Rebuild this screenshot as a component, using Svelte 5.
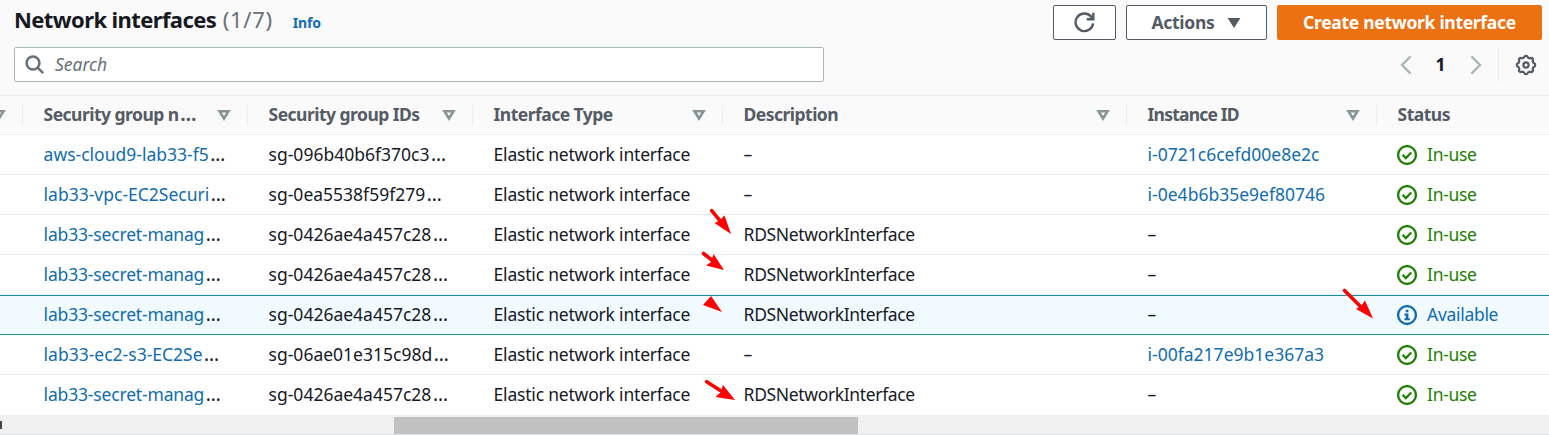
<script>
  const cols = ['Security group n…', 'Security group IDs', 'Interface Type', 'Description', 'Instance ID'];
  const rds = 'RDSNetworkInterface';
  const rows = [
    ['aws-cloud9-lab33-f5', 'sg-096b40b6f370c3', '–', 'i-0721c6cefd00e8e2c'],
    ['lab33-vpc-EC2Securi', 'sg-0ea5538f59f279', '–', 'i-0e4b6b35e9ef80746'],
    ['lab33-secret-manag', 'sg-0426ae4a457c28', rds, '–'],
    ['lab33-secret-manag', 'sg-0426ae4a457c28', rds, '–'],
    ['lab33-secret-manag', 'sg-0426ae4a457c28', rds, '–', true],
    ['lab33-ec2-s3-EC2Se', 'sg-06ae01e315c98d', '–', 'i-00fa217e9b1e367a3'],
    ['lab33-secret-manag', 'sg-0426ae4a457c28', rds, '–']
  ];
  // Outline of the settings cog: eight rounded teeth around the centre (11, 11).
  const gear = Array.from({ length: 64 }, (_, i) => {
    const a = (i / 64) * Math.PI * 2;
    const r = 8.35 + 0.75 * Math.tanh(3 * Math.cos(8 * a));
    return `${i ? 'L' : 'M'}${(11 + r * Math.cos(a)).toFixed(2)} ${(11 + r * Math.sin(a)).toFixed(2)}`;
  }).join('') + 'Z';
</script>

{#snippet filter()}
  <svg class="filter" width="14" height="12" viewBox="0 0 14 12"><path d="M2.500 2.200h9L7 9.500z" /></svg>
{/snippet}

<main>
  <header>
    <h1>Network interfaces <span>(1/7)</span></h1>
    <a class="info" href="#info">Info</a>
    <div class="actions">
      <button class="refresh" aria-label="Refresh">
        <svg width="22" height="22" viewBox="0 0 22 22"><path d="M19.100 11.300A8.800 8.800 0 1 1 16.900 4.400L19.100 6.800" /><path d="M19.300 .7v6.600h-6.600" /></svg>
      </button>
      <button class="menu"><span>Actions</span><svg width="14" height="12" viewBox="0 0 14 12"><path d="M.6 1h12.800L7 11z" /></svg></button>
      <button class="create"><span>Create network interface</span></button>
    </div>
  </header>

  <div class="tools">
    <label class="search">
      <svg width="20" height="20" viewBox="0 0 20 20"><circle cx="8" cy="8" r="6.400" /><path d="M12.600 12.600l5.600 5.600" /></svg>
      <span>Search</span>
    </label>
    <nav>
      <svg class="chev" width="12" height="20" viewBox="0 0 12 20"><path d="M10.600 1.400L2 10l8.600 8.600" /></svg>
      <b>1</b>
      <svg class="chev" width="12" height="20" viewBox="0 0 12 20"><path d="M1.400 1.400L10 10l-8.600 8.600" /></svg>
      <i></i>
      <svg class="gear" width="22" height="22" viewBox="0 0 22 22">
        <path d={gear} />
        <circle cx="11" cy="11" r="2.600" />
      </svg>
    </nav>
  </div>

  <section class="table">
    <div class="row head">
      <div class="edge">{@render filter()}</div>
      {#each cols as name}
        <div class="th"><span class:tight={name === 'Instance ID'}>{name.replace('…', '')}{#if name.endsWith('…')}<span class="dots">…</span>{/if}</span>{@render filter()}</div>
      {/each}
      <div class="th"><span>Status</span></div>
    </div>
    {#each rows as [group, id, description, instance, selected]}
      <div class="row" class:selected>
        <div></div>
        <div class="td name"><a class:narrow={group.includes('secret')} href="#group">{group}</a><span class="dots">…</span></div>
        <div class="td id">{id}<span class="dots">…</span></div>
        <div class="td type">Elastic network interface</div>
        <div class="td desc">{description}</div>
        <div class="td inst">{#if instance === '–'}–{:else}<a href="#instance">{instance}</a>{/if}</div>
        <div class="td status" class:available={selected}>
          <svg width="20" height="20" viewBox="0 0 20 20">
            <circle cx="10" cy="10" r="8.900" />
            {#if selected}
              <path class="solid" d="M8.700 4.700h2.700v2.500H8.700zM7.400 8.500h4v4.700h1.400v2H7.400v-2h1.400v-2.700H7.400z" />
            {:else}
              <path d="M5.700 9.900l3.100 3.100 5.500-5.500" />
            {/if}
          </svg>
          <span>{selected ? 'Available' : 'In-use'}</span>
        </div>
      </div>
    {/each}
    <svg class="arrows" width="1549" height="435" viewBox="0 0 1549 435">
      <g stroke="#f00" stroke-width="3.600" stroke-linecap="round">
        <path d="M711.700 210.700l9 11M703.500 253.500l9 7M706.700 381.700l14 9M1344.500 290.500l17 17" />
      </g>
      <path fill="#f00" d="M731 234l-16.500-11 5-2.500 5-5zM724 270l-18-4.500 5-3.500 2.500-8zM722 312l-19-7 8-9zM735 400l-19.500-3 5-4.500 2.500-7.500zM1373 318.500l-17-9.500 5-3 4-5.500z" />
    </svg>
  </section>
  <div class="scroll"><span class="left"></span><div class="thumb"></div></div>
</main>

<style>
  :global(body) { background: #fafafa; }
  main { position: relative; width: 1549px; height: 435px; overflow: hidden; background: #fafafa; color: #16191f; font: 17.5px/20px 'Noto Sans', sans-serif; font-stretch: 90%; }
  a { color: #0f6cb0; text-decoration: none; }
  svg { display: block; flex: none; fill: none; }
  header { display: flex; height: 41px; padding: 0 7px 0 14px; box-sizing: border-box; white-space: nowrap; }
  h1 { margin: 0; padding-top: 4px; font-size: 22px; line-height: 30px; font-weight: 700; letter-spacing: -.6px; }
  h1 span { margin-left: 1.5px; color: #687078; font-weight: 400; letter-spacing: .7px; }
  .info { margin: 13px 0 0 20px; font-size: 14px; font-weight: 700; letter-spacing: -.2px; }
  .actions { display: flex; gap: 10px; margin-left: auto; padding-top: 5px; }
  button { box-sizing: border-box; height: 35px; padding: 0; display: flex; align-items: center; justify-content: center; border: 1px solid #545b64; border-radius: 2px; background: #fff; color: #545b64; font: 700 17.5px/20px 'Noto Sans', sans-serif; font-stretch: 90%; letter-spacing: -.3px; }
  button span { padding-bottom: 2px; }
  .refresh { width: 63px; }
  .refresh svg { stroke: #545b64; stroke-width: 2.4; }
  .menu { width: 141px; gap: 13px; }
  .menu svg { fill: #545b64; }
  .create { width: 265px; border-color: #ec7211; background: #ec7211; color: #fff; }
  .tools { display: flex; height: 54px; padding: 6px 12px 0 14px; box-sizing: border-box; }
  .search { box-sizing: border-box; width: 810px; height: 35px; border: 1px solid #aab7b8; border-radius: 2px; background: #fff; display: flex; align-items: center; padding-left: 10px; gap: 10px; color: #687078; font-style: italic; }
  .search span { padding-bottom: 1px; }
  .search svg { stroke: #687078; stroke-width: 2.5; }
  nav { display: flex; height: 35px; align-items: center; margin-left: auto; }
  nav b { width: 58px; text-align: center; padding: 0 1px 2px 0; box-sizing: border-box; }
  nav i { width: 1px; height: 35px; background: #eaeded; margin: 0 16px; }
  .chev { stroke: #aab7b8; stroke-width: 2.4; }
  .gear { stroke: #545b64; stroke-width: 2.2; }
  .table { height: 320px; background: #fff; }
  .row { display: grid; grid-template-columns: 22px 225px 225px 250px 404px 250px 1fr; height: 40px; box-sizing: border-box; border-bottom: 1px solid #eaeded; align-items: center; white-space: nowrap; }
  .row:last-of-type { border-bottom: 0; }
  .head { background: #fafafa; border-top: 1px solid #eaeded; color: #545b64; font-weight: 700; letter-spacing: -.53px; }
  .th { display: flex; align-items: center; height: 20px; padding: 0 16px 0 20.600px; border-left: 1px solid #eaeded; justify-content: space-between; }
  .th > span { padding-bottom: 2px; }
  .tight { letter-spacing: -.8px; }
  .edge { display: flex; justify-content: flex-end; padding-right: 16px; }
  .filter { stroke: #879596; stroke-width: 2.6; }
  .dots { margin-left: 1.5px; font-size: 19px; line-height: 0; letter-spacing: 0; font-weight: 400; }
  .head .dots { font-weight: 700; }
  .td { padding: 0 0 2px 21.600px; }
  .narrow { letter-spacing: -.17px; }
  .type { letter-spacing: -.2px; }
  .desc { letter-spacing: -.35px; }
  .selected { background: #f1faff; border-bottom-color: #1e8d9d; box-shadow: inset 0 1px #1e8d9d; }
  .status { display: flex; align-items: center; gap: 10px; padding: 0 0 0 21px; color: #1d8102; letter-spacing: -.3px; }
  .status span { padding-bottom: 2px; }
  .status svg { stroke: currentColor; stroke-width: 2.3; }
  .status .solid { fill: currentColor; stroke: none; }
  .available { color: #0f6cb0; }
  .arrows { position: absolute; left: 0; top: 0; pointer-events: none; }
  .scroll { height: 20px; box-sizing: border-box; background: #f0f0f0; border-bottom: 1px solid #dfe3e5; display: flex; align-items: center; }
  .left { width: 2px; height: 8px; background: #444; margin-right: 392px; }
  .thumb { width: 464px; height: 17px; margin-top: 2px; background: #c1c1c1; }
</style>
